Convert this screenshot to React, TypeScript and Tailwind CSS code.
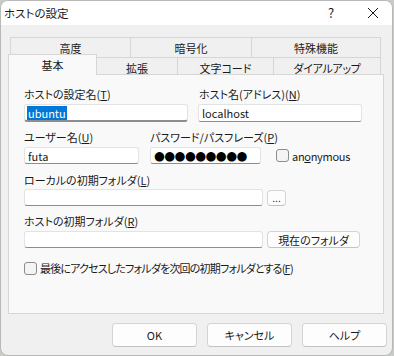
import React from "react";

const F = "font-['Noto_Sans_CJK_JP',sans-serif] [font-feature-settings:'palt'] text-[11px] text-[#1a1a1a]";

function Label({ children, className = "" }: { children: React.ReactNode; className?: string }) {
  return <div className={"h-[16px] leading-[16px] whitespace-nowrap " + className}>{children}</div>;
}

function Input({ children, className = "" }: { children?: React.ReactNode; className?: string }) {
  return (
    <div className={"h-[17px] bg-white border border-[#e3e3e3] border-b-[#8d8d8d] rounded-[3px] flex items-center px-[2px] leading-[14px] overflow-hidden " + className}>
      {children}
    </div>
  );
}

function Btn({ children, className = "" }: { children: React.ReactNode; className?: string }) {
  return (
    <div className={"bg-[#fdfdfd] border border-[#d4d4d4] border-b-[#c2c2c2] rounded-[4px] flex items-center justify-center " + className}>
      {children}
    </div>
  );
}

function Check() {
  return <div className="w-[13px] h-[13px] rounded-[3px] border border-[#8c8c8c] bg-[#f4f4f4] shrink-0" />;
}

export default function App() {
  return (
    <div className={"w-[394px] h-[356px] bg-[#c9cbc6] " + F}>
      <div className="w-[393px] h-[356px] bg-[#f0f0f0] border border-[#b8b8b8] rounded-[8px] overflow-hidden flex flex-col">
        {/* title bar */}
        <div className="h-[24px] bg-white flex items-center shrink-0">
          <div className="pl-[3px] pt-[1px] text-[11.5px]">ホストの設定</div>
          <div className="ml-auto w-[20px] text-center text-[13px] mr-[26px]">?</div>
          <svg width="12" height="12" viewBox="0 0 12 12" className="mr-[13px]">
            <path d="M1 1L11 11M11 1L1 11" stroke="#1a1a1a" strokeWidth="1" fill="none" />
          </svg>
        </div>

        {/* tabs back row */}
        <div className="mt-[12px] ml-[9px] flex h-[20px]">
          <div className="w-[120px] border-t border-l border-[#d6d6d6] flex justify-center pt-[2px] leading-[16px]">高度</div>
          <div className="w-[121px] border-t border-l border-[#d6d6d6] flex justify-center pt-[2px] leading-[16px]">暗号化</div>
          <div className="w-[130px] border-t border-l border-r border-[#d6d6d6] flex justify-center pt-[2px] leading-[16px]">特殊機能</div>
        </div>
        {/* tabs front row */}
        <div className="-mt-[3px] ml-[7px] flex items-end h-[20px] relative z-10">
          <div className="w-[89px] h-[21px] -mb-[1px] bg-[#f9f9f9] border-t border-l border-r border-[#d6d6d6] flex justify-center pt-[2px] leading-[16px]">基本</div>
          <div className="w-[81px] h-[17px] border-t border-r border-[#d6d6d6] flex justify-center pt-[2px] leading-[16px]">拡張</div>
          <div className="w-[96px] h-[17px] border-t border-r border-[#d6d6d6] flex justify-center pt-[2px] leading-[16px]">文字コード</div>
          <div className="w-[107px] h-[17px] border-t border-r border-[#d6d6d6] flex justify-center pt-[2px] leading-[16px] tracking-[-0.3px]">ダイアルアップ</div>
        </div>

        {/* panel */}
        <div className="ml-[7px] w-[376px] h-[240px] bg-[#f9f9f9] border border-[#d6d6d6] pl-[15px] pt-[11px] flex flex-col shrink-0">
          {/* row 1 */}
          <div className="flex gap-[10px]">
            <div className="w-[164px] flex flex-col gap-[2px]">
              <Label>ホストの設定名(<u>T</u>)</Label>
              <Input className="h-[18px] border-b-2 border-b-[#005fb8]">
                <span className="bg-[#0078d7] text-white px-[1px]">ubuntu</span>
              </Input>
            </div>
            <div className="w-[164px] flex flex-col gap-[2px]">
              <Label className="pl-[1px]">ホスト名(アドレス)(<u>N</u>)</Label>
              <Input className="h-[18px] px-[3px]">localhost</Input>
            </div>
          </div>
          {/* row 2 */}
          <div className="flex mt-[7px]">
            <div className="w-[115px] flex flex-col gap-[2px]">
              <Label>ユーザー名(<u>U</u>)</Label>
              <Input className="px-[3px]">futa</Input>
            </div>
            <div className="w-[111px] ml-[11px] flex flex-col gap-[2px]">
              <Label>パスワード/パスフレーズ(<u>P</u>)</Label>
              <Input className="px-[3px]">
                <span className="text-[12.5px] tracking-[-0.6px] leading-[12px] text-black font-['DejaVu_Sans',sans-serif] [font-feature-settings:normal]">●●●●●●●●●</span>
              </Input>
            </div>
            <div className="ml-[15px] flex flex-col gap-[2px]">
              <div className="h-[16px]" />
              <div className="h-[17px] flex items-center gap-[3px]">
                <Check />
                <span className="leading-[14px] tracking-[-0.3px]">an<u>o</u>nymous</span>
              </div>
            </div>
          </div>
          {/* row 3 */}
          <div className="flex flex-col mt-[8px] gap-[1px]">
            <Label>ローカルの初期フォルダ(<u>L</u>)</Label>
            <div className="flex gap-[4px] items-start">
              <Input className="w-[239px]" />
              <Btn className="w-[19px] h-[16px] mt-[1px] text-[10px] leading-[10px] items-end pb-[2px]">...</Btn>
            </div>
          </div>
          {/* row 4 */}
          <div className="flex flex-col mt-[7px] gap-[2px]">
            <Label>ホストの初期フォルダ(<u>R</u>)</Label>
            <div className="flex gap-[4px]">
              <Input className="w-[239px]" />
              <Btn className="w-[93px] h-[17px] leading-[14px]">現在のフォルダ</Btn>
            </div>
          </div>
          {/* checkbox row */}
          <div className="mt-[12px] h-[16px] flex items-center gap-[3px]">
            <Check />
            <span className="leading-[16px] tracking-[-0.8px] whitespace-nowrap">最後にアクセスしたフォルダを次回の初期フォルダとする(<u>F</u>)</span>
          </div>
        </div>

        {/* buttons */}
        <div className="mt-[9px] flex justify-end gap-[10px] pr-[5px]">
          <Btn className="w-[85px] h-[24px] border-[#005fb8] border-b-[#005fb8]">OK</Btn>
          <Btn className="w-[85px] h-[24px]">キャンセル</Btn>
          <Btn className="w-[85px] h-[24px]">ヘルプ</Btn>
        </div>
      </div>
    </div>
  );
}
